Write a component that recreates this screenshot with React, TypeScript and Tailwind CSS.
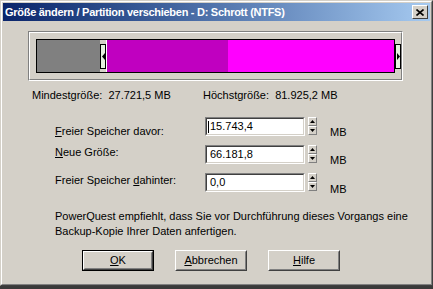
import type { ReactNode } from 'react';

const FONT = { fontFamily: '"Liberation Sans", Arial, sans-serif' };

function Sunken({ value, caret = false }: { value: string; caret?: boolean }) {
  return (
    <div className="flex items-start">
      <div className="w-[100px] h-[19px] border border-t-[#808080] border-l-[#808080] border-b-white border-r-white">
        <div className="h-full flex items-start border border-t-[#404040] border-l-[#404040] border-b-[#d4d0c8] border-r-[#d4d0c8] bg-white pl-[1px] text-[11px] leading-[15px] text-black">
          {caret ? <span className="mt-[2px] mr-px w-px h-[12px] bg-black" /> : <span className="w-[2px]" />}
          <span>{value}</span>
        </div>
      </div>
      <div className="ml-[3px] flex flex-col">
        <SpinButton up />
        <SpinButton />
      </div>
    </div>
  );
}

function SpinButton({ up = false }: { up?: boolean }) {
  return (
    <div className="w-[9px] h-[9px] bg-[#d4d0c8] border border-t-white border-l-white border-b-[#808080] border-r-[#808080] flex items-center justify-center">
      <svg width="5" height="3" viewBox="0 0 5 3">
        {up ? <path d="M2.5 0 L5 3 L0 3 Z" fill="#000" /> : <path d="M0 0 L5 0 L2.5 3 Z" fill="#000" />}
      </svg>
    </div>
  );
}

function Button({ children, isDefault = false }: { children: ReactNode; isDefault?: boolean }) {
  return (
    <div className={`w-[72px] h-[21px] ${isDefault ? 'border border-black' : ''}`}>
      <div className="h-full border border-t-white border-l-white border-b-[#404040] border-r-[#404040]">
        <div className="h-full flex items-center justify-center border border-transparent border-b-[#808080] border-r-[#808080] text-[11px] text-black">
          {children}
        </div>
      </div>
    </div>
  );
}

function Handle({ right = false }: { right?: boolean }) {
  return (
    <div className="w-[6px] h-[25px] bg-[#e6f2e0] border border-black flex items-center justify-center shrink-0">
      <svg width="3" height="7" viewBox="0 0 3 7">
        {right ? <path d="M0 0 L3 3.5 L0 7 Z" fill="#000" /> : <path d="M3 0 L0 3.5 L3 7 Z" fill="#000" />}
      </svg>
    </div>
  );
}

export default function App() {
  return (
    <div className="w-[433px] h-[289px] bg-[#3a3a3a] overflow-hidden" style={FONT}>
      <div className="w-[433px] h-[286px] bg-[#d4d0c8] border border-t-[#d4d0c8] border-l-[#d4d0c8] border-b-[#404040] border-r-[#404040]">
        <div className="h-full border border-t-white border-l-white border-b-[#808080] border-r-[#808080] p-[1px]">
          {/* title bar */}
          <div className="h-[18px] flex items-center pl-[2px] pr-[2px] bg-gradient-to-r from-[#0a246a] to-[#a6caf0]">
            <span className="text-white font-bold text-[11px] tracking-[-0.28px]">Größe ändern / Partition verschieben - D: Schrott (NTFS)</span>
            <div className="ml-auto w-[16px] h-[14px] bg-[#d4d0c8] border border-t-white border-l-white border-b-[#404040] border-r-[#404040] flex items-center justify-center">
              <svg width="8" height="7" viewBox="0 0 8 7">
                <path d="M0.5 0.5 L7.5 6.5 M7.5 0.5 L0.5 6.5" stroke="#000" strokeWidth="1.6" />
              </svg>
            </div>
          </div>

          {/* partition bar */}
          <div className="mt-[10px] ml-[25px] w-[375px] h-[50px] border border-t-[#808080] border-l-[#808080] border-b-white border-r-white">
            <div className="h-full border border-t-white border-l-white border-b-[#808080] border-r-[#808080] pl-[6px] pt-[6px]">
              <div className="flex items-center">
                <div className="w-[361px] h-[34px] border border-black flex items-center">
                  <div className="w-[63px] h-full bg-[#808080]" />
                  <Handle />
                  <div className="w-px h-full bg-white" />
                  <div className="w-[121px] h-full bg-[#c000c0]" />
                  <div className="flex-1 h-full bg-[#ff00ff]" />
                </div>
                <Handle right />
              </div>
            </div>
          </div>

          {/* limits */}
          <div className="mt-[8px] ml-[29px] flex text-[11px] leading-[13px] text-black">
            <span className="w-[171px]">Mindestgröße:&nbsp; 27.721,5 MB</span>
            <span>Höchstgröße:&nbsp; 81.925,2 MB</span>
          </div>

          {/* form */}
          <div className="mt-[15px] ml-[52px] w-fit grid grid-cols-[150px_112px_auto] grid-rows-[19px_19px_19px] gap-y-[9px] text-[11px] text-black">
            <span className="mt-[8px] leading-[13px]"><u>F</u>reier Speicher davor:</span>
            <Sunken value="15.743,4" caret />
            <span className="ml-[13px] mt-[9px] leading-[13px]">MB</span>

            <span className="mt-[1px] leading-[13px]"><u>N</u>eue Größe:</span>
            <Sunken value="66.181,8" />
            <span className="ml-[13px] mt-[9px] leading-[13px]">MB</span>

            <span className="mt-[1px] leading-[13px]">Freier Speicher <u>d</u>ahinter:</span>
            <Sunken value="0,0" />
            <span className="ml-[13px] mt-[10px] leading-[13px]">MB</span>
          </div>

          {/* note */}
          <p className="mt-[17px] ml-[52px] text-[11px] leading-[15px] text-black">
            PowerQuest empfiehlt, dass Sie vor Durchführung dieses Vorgangs eine
            <br />
            Backup-Kopie Ihrer Daten anfertigen.
          </p>

          {/* buttons */}
          <div className="mt-[11px] ml-[79px] flex gap-[21px]">
            <Button isDefault>
              <span><u>O</u>K</span>
            </Button>
            <Button>
              <span><u>A</u>bbrechen</span>
            </Button>
            <Button>
              <span><u>H</u>ilfe</span>
            </Button>
          </div>
        </div>
      </div>
    </div>
  );
}
